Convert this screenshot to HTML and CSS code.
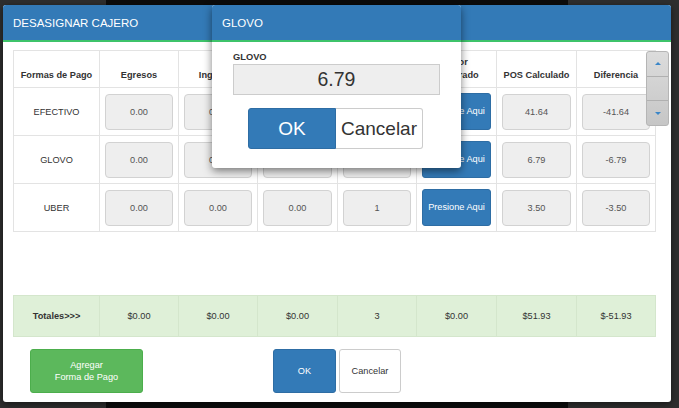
FILE: index.html
```html
<!DOCTYPE html>
<html>
<head>
<meta charset="utf-8">
<link rel="stylesheet" href="styles.css">
</head>
<body>
<div class="desk">
  <div class="back-window"></div>

  <div class="modal main">
    <div class="modal-head">DESASIGNAR CAJERO</div>
    <div class="modal-body">
      <table class="grid">
        <colgroup>
          <col class="c1"><col class="cn"><col class="cn"><col class="cw"><col class="cn"><col class="cw"><col class="cw"><col class="cn">
        </colgroup>
        <thead>
          <tr>
            <th>Formas de Pago</th>
            <th>Egresos</th>
            <th>Ingresos</th>
            <th>Retiros</th>
            <th>Cantidad</th>
            <th>Valor<br>Declarado</th>
            <th>POS Calculado</th>
            <th>Diferencia</th>
          </tr>
        </thead>
        <tbody>
          <tr>
            <td>EFECTIVO</td>
            <td><div class="box">0.00</div></td>
            <td><div class="box">0.00</div></td>
            <td><div class="box">0.00</div></td>
            <td><div class="box">1</div></td>
            <td><div class="btn-cell">Presione Aqui</div></td>
            <td><div class="box">41.64</div></td>
            <td><div class="box">-41.64</div></td>
          </tr>
          <tr>
            <td>GLOVO</td>
            <td><div class="box">0.00</div></td>
            <td><div class="box">0.00</div></td>
            <td><div class="box">0.00</div></td>
            <td><div class="box">1</div></td>
            <td><div class="btn-cell">Presione Aqui</div></td>
            <td><div class="box">6.79</div></td>
            <td><div class="box">-6.79</div></td>
          </tr>
          <tr>
            <td>UBER</td>
            <td><div class="box">0.00</div></td>
            <td><div class="box">0.00</div></td>
            <td><div class="box">0.00</div></td>
            <td><div class="box">1</div></td>
            <td><div class="btn-cell">Presione Aqui</div></td>
            <td><div class="box">3.50</div></td>
            <td><div class="box">-3.50</div></td>
          </tr>
        </tbody>
      </table>

      <table class="grid totals">
        <colgroup>
          <col class="c1"><col class="cn"><col class="cn"><col class="cw"><col class="cn"><col class="cw"><col class="cw"><col class="cn">
        </colgroup>
        <tbody>
          <tr>
            <td class="bold">Totales&gt;&gt;&gt;</td>
            <td>$0.00</td>
            <td>$0.00</td>
            <td>$0.00</td>
            <td>3</td>
            <td>$0.00</td>
            <td>$51.93</td>
            <td>$-51.93</td>
          </tr>
        </tbody>
      </table>

      <div class="actions">
        <button class="btn green">Agregar<br>Forma de Pago</button>
        <div class="pair">
          <button class="btn blue small">OK</button>
          <button class="btn white small">Cancelar</button>
        </div>
      </div>
    </div>

    <div class="scroller">
      <div class="seg"><span class="tri up"></span></div>
      <div class="seg mid"></div>
      <div class="seg"><span class="tri down"></span></div>
    </div>
  </div>

  <div class="modal dialog">
    <div class="modal-head">GLOVO</div>
    <div class="dialog-body">
      <div class="label">GLOVO</div>
      <div class="big-input">6.79</div>
      <div class="group">
        <button class="btn blue big left">OK</button>
        <button class="btn white big right">Cancelar</button>
      </div>
    </div>
  </div>
</div>
</body>
</html>
```

FILE: styles.css
```css
* { box-sizing: border-box; }
html, body { margin: 0; padding: 0; }
body {
  width: 679px;
  height: 408px;
  overflow: hidden;
  background: #2e2e2e;
  font-family: "Liberation Sans", Arial, sans-serif;
  color: #333;
}
.desk { position: relative; width: 679px; height: 408px; }
.back-window {
  position: absolute;
  left: 106px; top: 0;
  width: 462px; height: 408px;
  background: #0c0c0c;
}
.modal {
  position: absolute;
  background: #fff;
  border-radius: 3px;
  overflow: hidden;
}
.main {
  left: 3px; top: 5px;
  width: 668px; height: 397px;
  box-shadow: 0 2px 6px rgba(0,0,0,0.5);
}
.modal-head {
  height: 37px;
  background: #337ab7;
  border-bottom: 2px solid #3ec36a;
  color: #fff;
  font-size: 11.5px;
  padding: 12px 0 0 10px;
  line-height: 13px;
}
.modal-body { padding: 8px 0 0 10px; }
.grid {
  border-collapse: collapse;
  table-layout: fixed;
  width: 643px;
  font-size: 9.2px;
}
.grid col.c1 { width: 86px; }
.grid col.cn { width: 79px; }
.grid col.cw { width: 80px; }
.grid th, .grid td {
  border: 1px solid #e3e3e3;
  text-align: center;
  padding: 0 5px;
}
.grid th {
  height: 37px;
  font-weight: bold;
  color: #333;
  line-height: 12.5px;
  padding: 0 1px 6px;
  vertical-align: bottom;
  white-space: nowrap;
}
.grid tbody td { height: 48px; color: #333; }
.box {
  height: 36px;
  background: #eee;
  border: 1px solid #d2d2d2;
  border-radius: 4px;
  line-height: 34px;
  color: #555;
}
.btn-cell {
  height: 37px;
  background: #337ab7;
  border: 1px solid #2e6da4;
  border-radius: 3px;
  line-height: 35px;
  color: #fff;
  white-space: nowrap;
  overflow: hidden;
}
.grid.totals { margin-top: 63px; }
.grid.totals tbody td {
  height: 41px;
  background: #dff0d8;
  border-color: #d4e6cc;
}
.grid.totals td.bold { font-weight: bold; }
.actions {
  display: flex;
  align-items: flex-start;
  margin-top: 12px;
  padding-left: 17px;
}
.btn {
  font-family: "Liberation Sans", Arial, sans-serif;
  border-radius: 3px;
  cursor: pointer;
  margin: 0;
  padding: 0;
}
.green {
  width: 113px; height: 44px;
  background: #5cb85c;
  border: 1px solid #4cae4c;
  color: #fff;
  font-size: 9.2px;
  line-height: 12px;
}
.pair { display: flex; gap: 3px; margin-left: 130px; }
.blue { background: #337ab7; border: 1px solid #2e6da4; color: #fff; }
.white { background: #fff; border: 1px solid #ccc; color: #333; }
.small { height: 44px; font-size: 9.2px; }
.pair .blue { width: 63px; }
.pair .white { width: 62px; }
.scroller {
  position: absolute;
  left: 643px; top: 46px;
  width: 23px; height: 75px;
  border-radius: 3px;
  border: 1px solid #b5b5b5;
  background: linear-gradient(#dcdcdc, #c6c6c6);
  display: flex;
  flex-direction: column;
}
.seg {
  flex: 1;
  display: flex;
  align-items: center;
  justify-content: center;
  border-bottom: 1px solid #b0b0b0;
}
.seg:last-child { border-bottom: none; }
.tri { width: 0; height: 0; border-left: 3px solid transparent; border-right: 3px solid transparent; }
.tri.up { border-bottom: 3px solid #3a86c8; }
.tri.down { border-top: 3px solid #3a86c8; }
.dialog {
  left: 212px; top: 5px;
  width: 249px; height: 163px;
  box-shadow: 0 3px 9px rgba(0,0,0,0.5);
}
.dialog .modal-head { padding-left: 10px; }
.dialog-body { padding: 9px 21px 0 21px; }
.label { font-size: 9.3px; font-weight: bold; line-height: 12px; height: 13px; }
.big-input {
  height: 31px;
  width: 207px;
  background: #eee;
  border: 1px solid #ccc;
  font-size: 19.5px;
  text-align: center;
  line-height: 29px;
  color: #333;
}
.group { display: flex; justify-content: center; margin-top: 13px; margin-right: 2px; }
.big { height: 41px; font-size: 19px; }
.group .left { width: 88px; border-radius: 3px 0 0 3px; }
.group .right { width: 87px; border-radius: 0 3px 3px 0; border-left: none; }
```
